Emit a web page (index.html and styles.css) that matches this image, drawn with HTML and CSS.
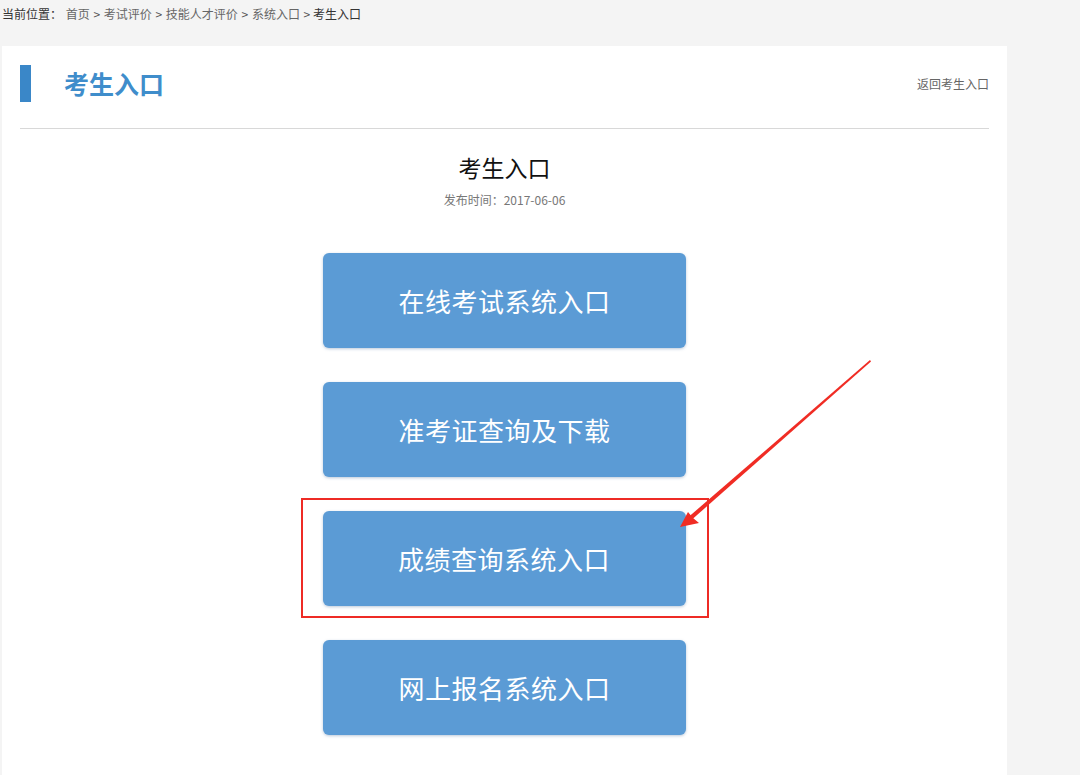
FILE: index.html
```html
<!DOCTYPE html>
<html lang="zh-CN">
<head>
<meta charset="utf-8">
<title>考生入口</title>
<link rel="stylesheet" href="styles.css">
</head>
<body>
<div class="crumbs"><span class="crumbs-label">当前位置：</span> <a>首页</a> &gt; <a>考试评价</a> &gt; <a>技能人才评价</a> &gt; <a>系统入口</a> &gt; <span class="crumbs-current">考生入口</span></div>
<div class="panel">
  <div class="panel-head">
    <div class="head-left"><span class="head-bar"></span><h1 class="head-title">考生入口</h1></div>
    <a class="head-back">返回考生入口</a>
  </div>
  <div class="article">
    <h2 class="article-title">考生入口</h2>
    <div class="article-meta">发布时间：2017-06-06</div>
    <div class="btn-list">
      <a class="entry-btn">在线考试系统入口</a>
      <a class="entry-btn">准考证查询及下载</a>
      <div class="highlight"><a class="entry-btn">成绩查询系统入口</a></div>
      <a class="entry-btn">网上报名系统入口</a>
    </div>
  </div>
</div>
<svg class="arrow" width="1080" height="775" viewBox="0 0 1080 775">
  <polygon points="870,360 871,361.5 688,523 685,520" fill="#f02c24"/>
  <polygon points="680,527 688,512 693,518 699,523" fill="#f02c24"/>
</svg>
</body>
</html>
```
FILE: styles.css
```css
html, body {
  margin: 0;
  padding: 0;
}
body {
  background: #f4f4f4;
  font-family: "Noto Sans CJK SC", "Microsoft YaHei", sans-serif;
  color: #333;
  width: 1080px;
  height: 775px;
  overflow: hidden;
  position: relative;
}
.crumbs {
  font-size: 12px;
  line-height: 28px;
  height: 28px;
  padding-left: 2px;
  color: #555;
  white-space: nowrap;
}
.crumbs-label {
  color: #333;
}
.crumbs a {
  color: #666;
  margin: 0 1px;
}
.crumbs-current {
  color: #333;
}
.panel {
  margin-top: 18px;
  margin-left: 2px;
  width: 969px;
  padding: 0 18px;
  background: #fff;
  height: 729px;
}
.panel-head {
  display: flex;
  justify-content: space-between;
  align-items: flex-start;
  height: 63px;
  padding-top: 19px;
  border-bottom: 1px solid #d8d8d8;
}
.head-left {
  display: flex;
  align-items: center;
}
.head-bar {
  display: block;
  width: 11px;
  height: 37px;
  background: #3a87c8;
  margin-right: 33px;
}
.head-title {
  margin: 0;
  font-size: 25px;
  font-weight: bold;
  color: #3f8dcb;
  line-height: 37px;
}
.head-back {
  font-size: 12px;
  color: #666;
  line-height: 37px;
}
.article {
  display: flex;
  flex-direction: column;
  align-items: center;
}
.article-title {
  margin: 22px 0 0;
  font-size: 23px;
  font-weight: normal;
  color: #111;
  line-height: 32px;
}
.article-meta {
  margin-top: 9px;
  font-size: 12px;
  color: #777;
  line-height: 16px;
}
.btn-list {
  margin-top: 45px;
  display: flex;
  flex-direction: column;
  align-items: center;
  gap: 34px;
}
.entry-btn {
  display: flex;
  align-items: center;
  justify-content: center;
  width: 363px;
  height: 95px;
  background: #5b9bd5;
  border-radius: 6px;
  color: #fff;
  font-size: 26px;
  letter-spacing: 0.5px;
  box-shadow: 0 1px 3px rgba(60, 100, 150, 0.35);
}
.highlight {
  border: 2px solid #ee2b25;
  padding: 11px 21px 10px 20px;
  margin: -13px 0 -12px 0;
  position: relative;
  left: 0;
}
.arrow {
  position: absolute;
  left: 0;
  top: 0;
  pointer-events: none;
}
```
